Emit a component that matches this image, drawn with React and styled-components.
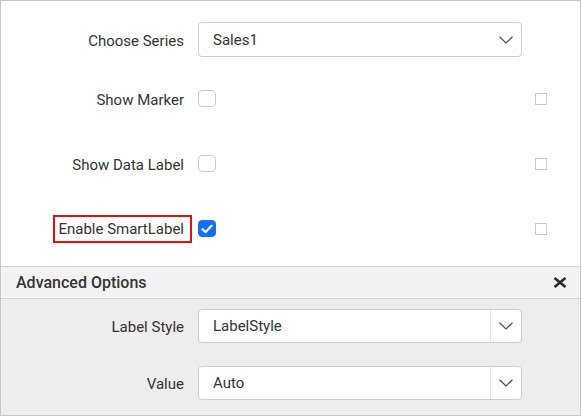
import React from "react";
import styled, { createGlobalStyle } from "styled-components";

const GlobalStyle = createGlobalStyle`
  html, body {
    margin: 0;
    padding: 0;
    background: #ffffff;
  }
  body {
    font-family: Roboto, "Liberation Sans", sans-serif;
    color: #333333;
  }
`;

const Panel = styled.div`
  box-sizing: border-box;
  width: 581px;
  height: 416px;
  border: 1px solid #c6c6c6;
  display: flex;
  flex-direction: column;
  overflow: hidden;
`;

const Section = styled.div`
  padding: 21px 0 5px;
  background: #ffffff;
`;

const Row = styled.div`
  display: grid;
  grid-template-columns: 191px 324px 1fr;
  column-gap: 6px;
  align-items: center;
  height: ${(p) => p.$h}px;
  margin-bottom: ${(p) => p.$mb || 0}px;
`;

const Label = styled.div`
  justify-self: end;
  box-sizing: border-box;
  font-size: 15px;
  line-height: 24px;
  color: #333333;
  padding: 0 8px 0 6px;
  margin-top: 2px;
  white-space: nowrap;
  ${(p) =>
    p.$marked &&
    `
    border: 2px solid #e31010;
    padding: 0 6px 0 3px;
    margin-top: 1px;
    `}
`;

const Select = styled.div`
  box-sizing: border-box;
  height: ${(p) => p.$h || 35}px;
  border: 1px solid #cdcdcd;
  border-radius: 4px;
  background: #ffffff;
  display: flex;
  align-items: stretch;
`;

const SelectText = styled.div`
  flex: 1;
  display: flex;
  align-items: center;
  padding-left: 14px;
  font-size: 15px;
  color: #333333;
`;

const SelectButton = styled.div`
  width: 30px;
  display: flex;
  align-items: center;
  justify-content: center;
  border-left: 1px solid ${(p) => (p.$split ? "#e4e4e4" : "transparent")};
`;

const CheckBox = styled.div`
  box-sizing: border-box;
  width: 18px;
  height: 17px;
  border-radius: 4px;
  border: 1px solid ${(p) => (p.$checked ? "#1a6ef5" : "#cacaca")};
  background: ${(p) => (p.$checked ? "#1a6ef5" : "#ffffff")};
  display: flex;
  align-items: center;
  justify-content: center;
`;

const MiniBox = styled.div`
  box-sizing: border-box;
  width: 12px;
  height: 12px;
  margin-left: 7px;
  border: 1px solid #cacaca;
  background: #ffffff;
`;

const Header = styled.div`
  box-sizing: border-box;
  height: 33px;
  border-top: 1px solid #d2d2d2;
  border-bottom: 1px solid #d2d2d2;
  background: #f3f3f3;
  display: flex;
  align-items: center;
  justify-content: space-between;
  padding: 0 13px 0 15px;
`;

const HeaderTitle = styled.div`
  font-size: 16px;
  font-weight: 500;
  color: #333333;
`;

const Advanced = styled.div`
  flex: 1;
  background: #ededed;
  padding-top: 10px;
`;

const Chevron = () => (
  <svg width="14" height="8" viewBox="0 0 14 8">
    <path d="M0.5 0.8 L7 7 L13.5 0.8" fill="none" stroke="#4a4a55" strokeWidth="1.2" />
  </svg>
);

const Check = () => (
  <svg width="12" height="10" viewBox="0 0 12 10">
    <path d="M1.5 5.2 L4.6 8 L10.5 1.8" fill="none" stroke="#ffffff" strokeWidth="2.2" strokeLinecap="round" strokeLinejoin="round" />
  </svg>
);

const CloseIcon = () => (
  <svg width="14" height="11" viewBox="0 0 14 11">
    <path d="M1.5 1 L12.5 10 M12.5 1 L1.5 10" fill="none" stroke="#2b2b2b" strokeWidth="2.6" />
  </svg>
);

function Dropdown({ value, split, h }) {
  return (
    <Select $h={h}>
      <SelectText>{value}</SelectText>
      <SelectButton $split={split}>
        <Chevron />
      </SelectButton>
    </Select>
  );
}

function CheckRow({ label, checked, marked }) {
  return (
    <Row $h={65}>
      <Label $marked={marked}>{label}</Label>
      <CheckBox $checked={checked}>{checked && <Check />}</CheckBox>
      <MiniBox />
    </Row>
  );
}

export default function App() {
  return (
    <>
      <GlobalStyle />
      <Panel>
        <Section>
          <Row $h={35} $mb={9}>
            <Label>Choose Series</Label>
            <Dropdown value="Sales1" />
          </Row>
          <CheckRow label="Show Marker" />
          <CheckRow label="Show Data Label" />
          <CheckRow label="Enable SmartLabel" checked marked />
        </Section>
        <Header>
          <HeaderTitle>Advanced Options</HeaderTitle>
          <CloseIcon />
        </Header>
        <Advanced>
          <Row $h={34} $mb={23}>
            <Label>Label Style</Label>
            <Dropdown value="LabelStyle" split h={34} />
          </Row>
          <Row $h={34}>
            <Label>Value</Label>
            <Dropdown value="Auto" split h={34} />
          </Row>
        </Advanced>
      </Panel>
    </>
  );
}
